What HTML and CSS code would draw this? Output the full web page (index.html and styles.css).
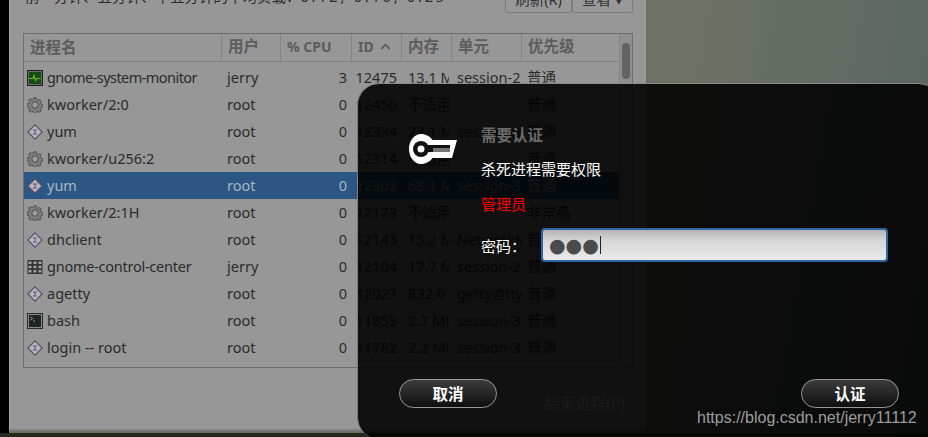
FILE: index.html
```html
<!DOCTYPE html>
<html lang="zh">
<head>
<meta charset="utf-8">
<title>系统监视器</title>
<link rel="stylesheet" href="styles.css">
</head>
<body>
<svg class="defs" width="0" height="0" aria-hidden="true">
  <symbol id="i-mon" viewBox="0 0 16 16">
    <rect x=".5" y=".5" width="15" height="15" fill="#6c6c6c" stroke="#1e1e1e"/>
    <rect x="2" y="2" width="12" height="12" fill="#174a10"/>
    <path d="M2 8.500h4l1-3 1.500 5 1-2h4" fill="none" stroke="#66b832" stroke-width="1.100"/>
  </symbol>
  <symbol id="i-gear" viewBox="0 0 16 16">
    <path d="M6.800.8h2.400l.4 2 1.500.6 1.700-1.100 1.700 1.700-1.100 1.700.6 1.500 2 .4v2.400l-2 .4-.6 1.500 1.100 1.700-1.700 1.700-1.700-1.100-1.500.6-.4 2H6.800l-.4-2-1.500-.6-1.700 1.100-1.700-1.700 1.100-1.700-.6-1.500-2-.4V6.800l2-.4.6-1.500-1.100-1.700 1.700-1.700 1.700 1.100 1.500-.6z" fill="#7c7c7c" stroke="#4e4e4e" stroke-width=".9"/>
    <circle cx="8" cy="8" r="3.200" fill="#9c9c9c" stroke="#505050"/>
  </symbol>
  <symbol id="i-dia" viewBox="0 0 16 16">
    <path d="M8 .8 15.200 8 8 15.200.8 8z" fill="#b8b2bc" stroke="#5b4a68" stroke-width="1.100"/>
    <path d="M5.500 5.500h5L8 8l2.500 2.500h-5L8 8z" fill="#70607e"/>
  </symbol>
  <symbol id="i-grid" viewBox="0 0 16 16">
    <rect x=".5" y="1" width="15" height="14" fill="#343434"/>
    <path d="M1.500 2.500h3v2.500h-3zm5 0h3v2.500h-3zm5 0h3v2.500h-3zM1.500 6.800h3v2.500h-3zm5 0h3v2.500h-3zm5 0h3v2.500h-3zM1.500 11h3v2.500h-3zm5 0h3v2.500h-3zm5 0h3v2.500h-3z" fill="#a2a2a2"/>
  </symbol>
  <symbol id="i-term" viewBox="0 0 16 16">
    <rect x=".5" y=".5" width="15" height="15" fill="#8a8a8a" stroke="#2b2b2b"/>
    <rect x="2" y="2" width="12" height="12" fill="#1d2624"/>
    <path d="M3.500 4l2 1.500-2 1.500M6 8h2" fill="none" stroke="#b9b9b9" stroke-width=".8"/>
  </symbol>
</svg>

<main class="window">
  <div class="toolbar">
    <p class="load">前一分钟、五分钟、十五分钟的平均负载：<span class="nums">0.12, 0.16, 0.25</span></p>
    <div class="tool-buttons">
      <button class="tool-btn refresh">刷新(R)</button>
      <button class="tool-btn view">查看 ▾</button>
    </div>
  </div>
  <div class="table">
    <div class="table-main">
      <div class="row head">
        <span class="c name">进程名</span>
        <span class="c user">用户</span>
        <span class="c cpu-h">% CPU</span>
        <span class="c pid-h">ID <svg class="sort" viewBox="0 0 12 8" width="11" height="7"><path d="M1 7l5-5 5 5" fill="none" stroke="#5e5e5e" stroke-width="2"/></svg></span>
        <span class="c mem">内存</span>
        <span class="c unit">单元</span>
        <span class="c prio">优先级</span>
      </div>
      <div class="row"><span class="c name tight-a"><svg class="ic"><use href="#i-mon"/></svg>gnome-system-monitor</span><span class="c user">jerry</span><span class="c cpu">3</span><span class="c pid">12475</span><span class="c mem">13.1 MiB</span><span class="c unit">session-2</span><span class="c prio">普通</span></div>
      <div class="row"><span class="c name"><svg class="ic"><use href="#i-gear"/></svg>kworker/2:0</span><span class="c user">root</span><span class="c cpu">0</span><span class="c pid">12450</span><span class="c mem">不适用</span><span class="c unit"></span><span class="c prio">普通</span></div>
      <div class="row"><span class="c name"><svg class="ic"><use href="#i-dia"/></svg>yum</span><span class="c user">root</span><span class="c cpu">0</span><span class="c pid">12334</span><span class="c mem">22.1 MiB</span><span class="c unit">session-3</span><span class="c prio">普通</span></div>
      <div class="row"><span class="c name"><svg class="ic"><use href="#i-gear"/></svg>kworker/u256:2</span><span class="c user">root</span><span class="c cpu">0</span><span class="c pid">12314</span><span class="c mem">不适用</span><span class="c unit"></span><span class="c prio">普通</span></div>
      <div class="row selected"><span class="c name"><svg class="ic"><use href="#i-dia"/></svg>yum</span><span class="c user">root</span><span class="c cpu">0</span><span class="c pid">12302</span><span class="c mem">68.1 MiB</span><span class="c unit">session-3</span><span class="c prio">普通</span></div>
      <div class="row"><span class="c name"><svg class="ic"><use href="#i-gear"/></svg>kworker/2:1H</span><span class="c user">root</span><span class="c cpu">0</span><span class="c pid">12173</span><span class="c mem">不适用</span><span class="c unit"></span><span class="c prio">非常高</span></div>
      <div class="row"><span class="c name"><svg class="ic"><use href="#i-dia"/></svg>dhclient</span><span class="c user">root</span><span class="c cpu">0</span><span class="c pid">12143</span><span class="c mem">15.2 MiB</span><span class="c unit">NetworkManager</span><span class="c prio">普通</span></div>
      <div class="row"><span class="c name tight-b"><svg class="ic"><use href="#i-grid"/></svg>gnome-control-center</span><span class="c user">jerry</span><span class="c cpu">0</span><span class="c pid">12104</span><span class="c mem">17.7 MiB</span><span class="c unit">session-2</span><span class="c prio">普通</span></div>
      <div class="row"><span class="c name"><svg class="ic"><use href="#i-dia"/></svg>agetty</span><span class="c user">root</span><span class="c cpu">0</span><span class="c pid">12027</span><span class="c mem">832.0 KiB</span><span class="c unit">getty@tty1</span><span class="c prio">普通</span></div>
      <div class="row"><span class="c name"><svg class="ic"><use href="#i-term"/></svg>bash</span><span class="c user">root</span><span class="c cpu">0</span><span class="c pid">11853</span><span class="c mem">2.7 MiB</span><span class="c unit">session-3</span><span class="c prio">普通</span></div>
      <div class="row"><span class="c name"><svg class="ic"><use href="#i-dia"/></svg>login -- root</span><span class="c user">root</span><span class="c cpu">0</span><span class="c pid">11762</span><span class="c mem">2.2 MiB</span><span class="c unit">session-3</span><span class="c prio">普通</span></div>
      <div class="row"><span class="c name"><svg class="ic"><use href="#i-gear"/></svg>sshd</span><span class="c user">root</span><span class="c cpu">0</span><span class="c pid">11700</span><span class="c mem">1.1 MiB</span><span class="c unit"></span><span class="c prio">普通</span></div>
    </div>
    <div class="scrollbar"><div class="thumb"></div></div>
  </div>
  <div class="window-actions"><button class="end-btn">结束进程(P)</button></div>
</main>

<section class="dialog">
  <div class="dialog-body">
    <svg class="key" viewBox="0 0 48 30" width="48" height="30" aria-hidden="true">
      <path fill-rule="evenodd" fill="#fff" d="M12 0c5 0 9 2.400 11.500 6H48l-5 18H23.500C21 27.600 17 30 12 30 5.400 30 0 23.300 0 15S5.400 0 12 0z"/>
      <circle cx="12" cy="15" r="8" fill="#111"/>
      <circle cx="12" cy="15" r="3.500" fill="#fff"/>
      <rect x="19" y="11" width="22" height="3" fill="#111"/>
      <rect x="24" y="14" width="17" height="4" fill="#777"/>
      <rect x="19" y="14" width="5" height="4" fill="#111"/>
    </svg>
    <div class="dialog-text">
      <h1 class="title">需要认证</h1>
      <p class="desc">杀死进程需要权限</p>
      <p class="admin">管理员</p>
      <div class="pw-row">
        <label class="pw-label">密码：</label>
        <div class="pw-input"><span class="dots">●●●</span><span class="caret"></span></div>
      </div>
    </div>
  </div>
  <div class="dialog-actions">
    <button class="pill">取消</button>
    <button class="pill">认证</button>
  </div>
</section>

<span class="watermark">https://blog.csdn.net/jerry11112</span>
</body>
</html>
```
FILE: styles.css
```css
html, body {
  margin: 0;
  width: 928px;
  height: 437px;
  overflow: hidden;
}
body {
  position: relative;
  font-family: "Noto Sans", "Noto Sans CJK SC", sans-serif;
  background:
    linear-gradient(to bottom, transparent 433px, #26271d 433px),
    linear-gradient(to right, #000 9px, transparent 9px),
    linear-gradient(100deg, #6c715f 0%, #6c7164 70%, #566460 100%);
}
.defs { position: absolute; }
.window {
  position: absolute;
  left: 9px;
  top: -30px;
  width: 637px;
  height: 461px;
  box-sizing: border-box;
  padding: 0 13px 0 14px;
  background: #979797;
  border-left: 1px solid #a8a8a8;
  border-bottom: 2px solid #808080;
  display: flex;
  flex-direction: column;
  color: #2b2b2b;
  font-size: 14.5px;
}
.toolbar {
  height: 43px;
  display: flex;
  justify-content: space-between;
  align-items: flex-end;
  margin-left: -1px;
}
.load {
  margin: 0 0 7px 2px;
  font-size: 14.5px;
  line-height: 20px;
  white-space: nowrap;
}
.nums { letter-spacing: 2.800px; }
.tool-buttons { display: flex; }
.tool-btn {
  height: 30px;
  border: 1px solid #7c7c7c;
  border-radius: 3px;
  background: #999;
  color: #333;
  font: inherit;
  padding: 0;
}
.refresh { width: 67px; }
.view { width: 61px; }
.table {
  height: 335px;
  margin-top: 20px;
  margin-left: -1px;
  border: 1px solid #6e6e6e;
  box-sizing: border-box;
  display: flex;
  overflow: hidden;
}
.table-main { flex: 1; min-width: 0; }
.row {
  display: grid;
  grid-template-columns: 198px 59px 71px 50px 50px 70px 1fr;
  height: 27px;
  line-height: 27px;
  white-space: nowrap;
}
.head {
  border-bottom: 1px solid #7f7f7f;
  font-weight: 700;
  color: #5c5c5c;
  font-size: 15.500px;
  height: 27px;
  line-height: 25px;
  margin-bottom: 2px;
}
.head .c {
  border-right: 1px solid #858585;
  padding-left: 6px;
}
.head .c:last-child { border-right: 0; }
.head .cpu-h, .head .pid-h { font-size: 14px; }
.c { overflow: hidden; min-width: 0; box-sizing: border-box; }
.name { display: flex; align-items: center; padding-left: 3px; }
.head .name { padding-left: 6px; }
.tight-a { letter-spacing: -.55px; }
.tight-b { letter-spacing: -.25px; }
.ic { width: 16px; height: 16px; margin-right: 4px; flex: none; }
.user { padding-left: 5px; }
.cpu { text-align: right; padding-right: 5px; }
.pid { text-align: right; padding-right: 5px; }
.mem { padding-left: 6px; width: 47px; }
.head .mem { width: auto; }
.unit { padding-left: 5px; }
.prio { padding-left: 5px; }
.sort { margin-left: 3px; vertical-align: 2px; }
.selected { background: #2c5784; color: #a9b4c0; }
.scrollbar {
  width: 13px;
  flex: none;
  background: #8f8f8f;
  border-left: 1px solid #858585;
  box-sizing: border-box;
  padding: 9px 2px;
}
.thumb { height: 36px; background: #636363; border-radius: 4px; }
.window-actions {
  display: flex;
  justify-content: flex-end;
  margin-top: 19px;
}
.end-btn {
  width: 97px;
  height: 30px;
  border: 1px solid #a4a4a4;
  border-radius: 3px;
  background: #999;
  color: #eee;
  font: 15.500px "Noto Sans", "Noto Sans CJK SC", sans-serif;
  padding: 0;
}
.dialog {
  position: absolute;
  left: 357px;
  top: 83px;
  width: 583px;
  height: 356px;
  box-sizing: border-box;
  border-radius: 22px;
  border-top: 1px solid #8a8a8a;
  border-left: 1px solid #7a7a7a;
  background: rgba(0, 0, 0, .89);
  padding: 41px 41px 0 51px;
  color: #fff;
  font-size: 15px;
}
.dialog-body { display: flex; }
.key { margin-top: 9px; margin-right: 24px; flex: none; }
.dialog-text { flex: 1; min-width: 0; }
.title {
  margin: 0;
  font-size: 15.500px;
  line-height: 20px;
  font-weight: 700;
  color: #6a6a6a;
}
.desc { margin: 14px 0 0; line-height: 20px; }
.admin { margin: 15px 0 0; line-height: 20px; color: #ff0000; }
.pw-row { display: flex; align-items: center; margin-top: 14px; }
.pw-label { width: 60px; flex: none; }
.pw-input {
  width: 347px;
  height: 34px;
  box-sizing: border-box;
  border: 2px solid #2f66a6;
  border-radius: 4px;
  background: linear-gradient(#b4b4b4, #d6d6d6 35%, #ebebeb);
  display: flex;
  align-items: center;
  padding-left: 6px;
}
.dots {
  font-family: "DejaVu Sans", sans-serif;
  font-size: 19px;
  line-height: 1;
  color: #4b4b4b;
}
.caret { width: 1px; height: 18px; background: #222; margin-left: 1px; }
.dialog-actions {
  display: flex;
  justify-content: space-between;
  margin: 117px 0 0 -10px;
}
.pill {
  width: 98px;
  height: 29px;
  border: 1px solid #9a9a9a;
  border-radius: 15px;
  background: linear-gradient(#3c3c3c, #0e0e0e);
  color: #fff;
  font: 700 15.500px "Noto Sans", "Noto Sans CJK SC", sans-serif;
  padding: 0;
}
.watermark {
  position: absolute;
  left: 697px;
  top: 408px;
  font: 16px/20px "Liberation Sans", sans-serif;
  color: #9d9d9d;
}
```
